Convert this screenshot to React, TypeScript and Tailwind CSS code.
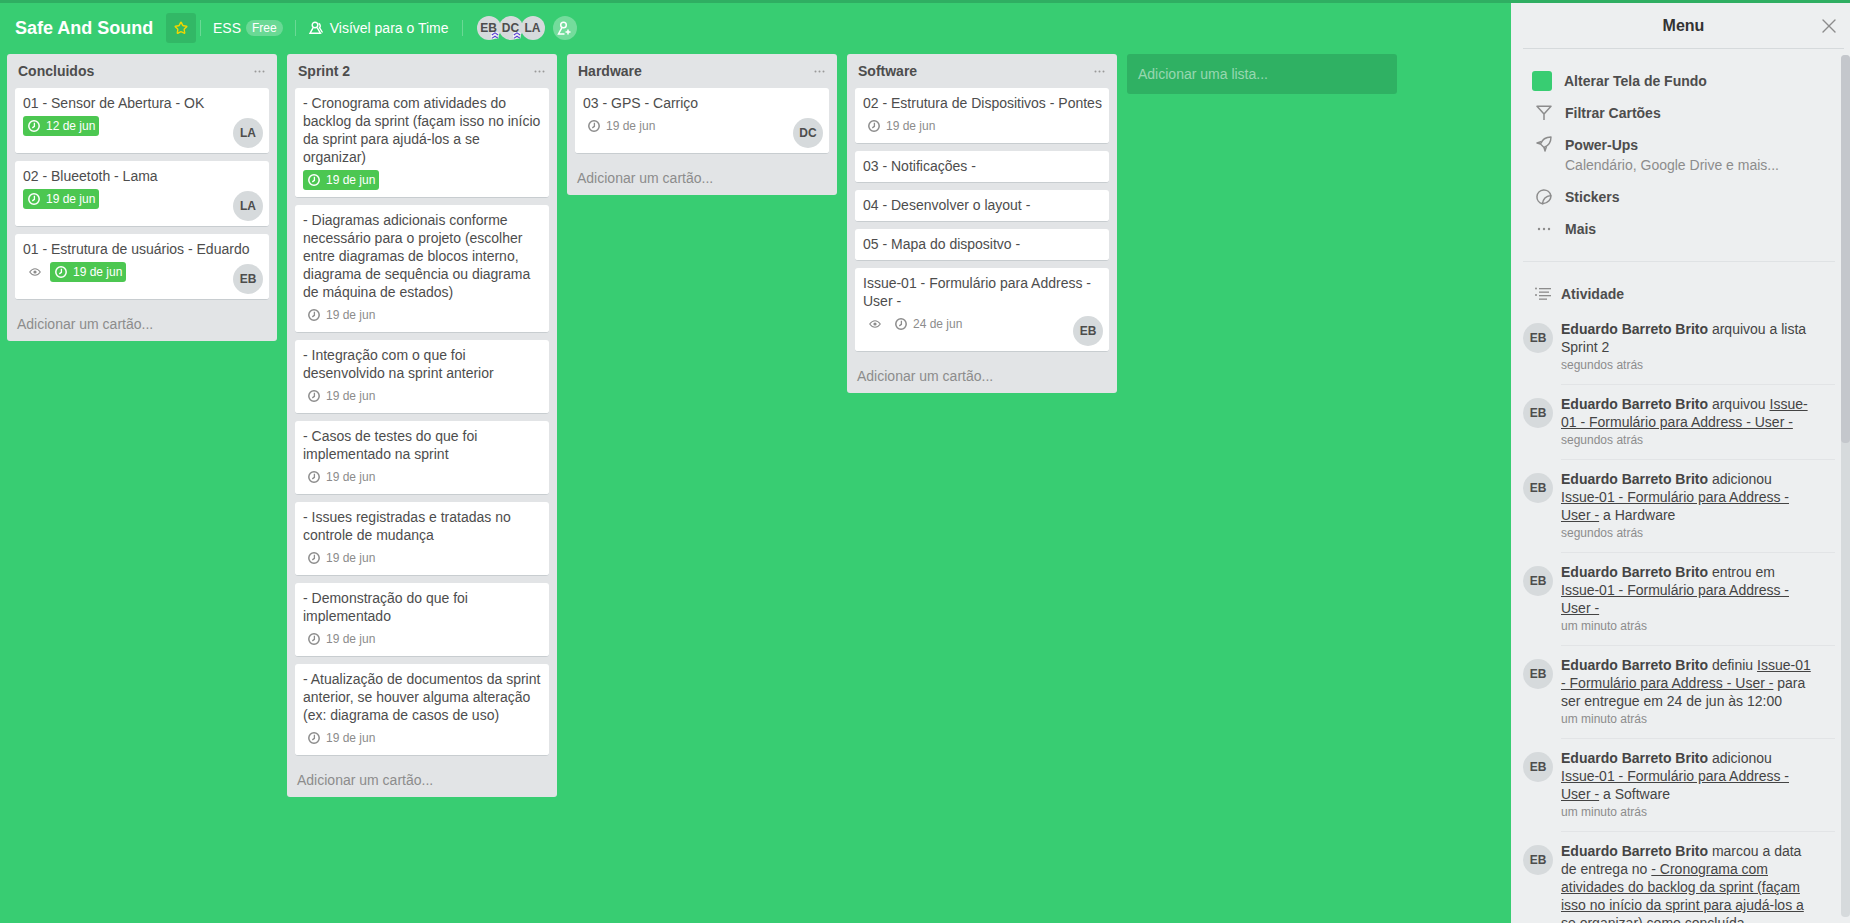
import { Star, X } from 'lucide-react'
import type { ReactNode } from 'react'

type CardData = {
  title: string
  date?: string
  done?: boolean
  watching?: boolean
  member?: string
}

type ListData = {
  name: string
  cards: CardData[]
}

const lists: ListData[] = [
  {
    name: 'Concluidos',
    cards: [
      { title: '01 - Sensor de Abertura - OK', date: '12 de jun', done: true, member: 'LA' },
      { title: '02 - Blueetoth - Lama', date: '19 de jun', done: true, member: 'LA' },
      {
        title: '01 - Estrutura de usuários - Eduardo',
        date: '19 de jun',
        done: true,
        watching: true,
        member: 'EB'
      }
    ]
  },
  {
    name: 'Sprint 2',
    cards: [
      {
        title:
          '- Cronograma com atividades do backlog da sprint (façam isso no início da sprint para ajudá-los a se organizar)',
        date: '19 de jun',
        done: true
      },
      {
        title:
          '- Diagramas adicionais conforme necessário para o projeto (escolher entre diagramas de blocos interno, diagrama de sequência ou diagrama de máquina de estados)',
        date: '19 de jun'
      },
      { title: '- Integração com o que foi desenvolvido na sprint anterior', date: '19 de jun' },
      { title: '- Casos de testes do que foi implementado na sprint', date: '19 de jun' },
      { title: '- Issues registradas e tratadas no controle de mudança', date: '19 de jun' },
      { title: '- Demonstração do que foi implementado', date: '19 de jun' },
      {
        title:
          '- Atualização de documentos da sprint anterior, se houver alguma alteração (ex: diagrama de casos de uso)',
        date: '19 de jun'
      }
    ]
  },
  {
    name: 'Hardware',
    cards: [{ title: '03 - GPS - Carriço', date: '19 de jun', member: 'DC' }]
  },
  {
    name: 'Software',
    cards: [
      { title: '02 - Estrutura de Dispositivos - Pontes', date: '19 de jun' },
      { title: '03 - Notificações -' },
      { title: '04 - Desenvolver o layout -' },
      { title: '05 - Mapa do dispositvo -' },
      {
        title: 'Issue-01 - Formulário para Address - User -',
        date: '24 de jun',
        watching: true,
        member: 'EB'
      }
    ]
  }
]

const ClockIcon = () => (
  <svg width="12" height="12" viewBox="0 0 12 12" fill="none" stroke="currentColor">
    <circle cx="6" cy="6" r="5.2" strokeWidth="1.5" />
    <path d="M6.400 2.800V6.400L4.300 7.900" strokeWidth="1.3" />
  </svg>
)

const EyeIcon = () => (
  <svg width="12" height="8" viewBox="0 0 12 8" fill="none" stroke="currentColor">
    <path d="M.7 4C2.400 1.600 4.200.7 6 .7s3.600.9 5.300 3.300C9.600 6.400 7.800 7.300 6 7.300S2.400 6.400.7 4Z" strokeWidth="1.1" />
    <circle cx="6" cy="4" r="1.600" fill="currentColor" stroke="none" />
  </svg>
)

const Dots = () => (
  <svg width="11" height="3" viewBox="0 0 11 3" fill="currentColor">
    <circle cx="1.5" cy="1.5" r="1" />
    <circle cx="5.5" cy="1.5" r="1" />
    <circle cx="9.5" cy="1.5" r="1" />
  </svg>
)

const MoreIcon = () => (
  <svg width="14" height="4" viewBox="0 0 14 4" fill="currentColor">
    <circle cx="2" cy="2" r="1.2" />
    <circle cx="7" cy="2" r="1.2" />
    <circle cx="12" cy="2" r="1.2" />
  </svg>
)

const Avatar = ({ initials, small }: { initials: string; small?: boolean }) => (
  <div
    className={
      small
        ? 'relative flex h-6 w-6 items-center justify-center rounded-full bg-[#d6dadc] text-xs font-bold text-[#4d4d4d]'
        : 'flex h-[30px] w-[30px] shrink-0 items-center justify-center rounded-full bg-[#d6dadc] text-xs font-bold text-[#4d4d4d]'
    }
  >
    {initials}
  </div>
)

const AdminChevron = () => (
  <svg
    className="absolute right-[2px] bottom-[1px] z-10 rounded-[2px] bg-white/60"
    width="8"
    height="7"
    viewBox="0 0 8 7"
    fill="none"
    stroke="#5b3fd6"
    strokeWidth="1.1"
  >
    <path d="M.8 3 4 .8 7.200 3M.8 6.400 4 4.200l3.200 2.200" />
  </svg>
)

const Card = ({ card }: { card: CardData }) => {
  const hasBadges = card.date || card.watching

  return (
    <div className="rounded-[3px] border-b border-[#c8cdd0] bg-white pt-1.5 pr-1.5 pl-2 text-[#4d4d4d]">
      <p>{card.title}</p>
      {hasBadges ? (
        <div className={card.member ? 'mt-1 mb-[5px] flex justify-between' : 'mt-1 mb-[7px] flex'}>
          <div className="flex h-5 items-center">
            {card.watching && (
              <span className="mr-1 flex w-[23px] justify-center text-[#8c8c8c]">
                <EyeIcon />
              </span>
            )}
            <span
              className={
                card.done
                  ? 'flex h-5 w-[76px] items-center gap-1.5 rounded-[3px] bg-[#4cc751] pl-[5px] text-xs text-white'
                  : 'flex h-5 w-[76px] items-center gap-1.5 rounded-[3px] pl-[5px] text-xs text-[#8c8c8c]'
              }
            >
              <ClockIcon />
              {card.date}
            </span>
          </div>
          {card.member && (
            <div className="mt-0.5">
              <Avatar initials={card.member} />
            </div>
          )}
        </div>
      ) : (
        <div className="h-[7px]" />
      )}
    </div>
  )
}

const List = ({ list }: { list: ListData }) => (
  <section className="w-[270px] shrink-0 self-start rounded-[3px] bg-[#e2e4e6]">
    <header className="flex h-[34px] items-center justify-between pr-3 pl-[11px] font-bold text-[#4d4d4d]">
      {list.name}
      <span className="text-[#999]">
        <Dots />
      </span>
    </header>
    <div className="flex flex-col gap-[7px] px-2">
      {list.cards.map((card) => (
        <Card key={card.title} card={card} />
      ))}
    </div>
    <div className="flex h-[41px] items-center px-2.5 pt-1.5 text-[#8c8c8c]">Adicionar um cartão...</div>
  </section>
)

const BoardHeader = () => (
  <div className="flex h-[50px] items-center pl-[15px] text-white">
    <h1 className="w-[139px] shrink-0 text-lg leading-none font-bold">Safe And Sound</h1>
    <button className="ml-3 flex h-[30px] w-[30px] items-center justify-center rounded-[3px] bg-black/10">
      <Star size={14} strokeWidth={2.4} className="text-[#f2d600]" />
    </button>
    <div className="ml-1 h-4 w-px bg-white/25" />
    <span className="ml-3">ESS</span>
    <span className="ml-[5px] rounded-full bg-white/25 px-1.5 text-xs leading-4">Free</span>
    <div className="ml-3 h-4 w-px bg-white/25" />
    <svg className="ml-3" width="16" height="14" viewBox="0 0 16 14" fill="none" stroke="#fff" strokeWidth="1.4">
      <circle cx="7" cy="4" r="2.800" />
      <path d="M5 6.800 2 12.300h10.500L9.300 6.800M10.500 2.500a2.500 2.500 0 0 1 1 4.200L14.500 11.500" />
    </svg>
    <span className="ml-1.5">Visível para o Time</span>
    <div className="ml-[13px] h-4 w-px bg-white/25" />
    <div className="ml-[14px] flex">
      <div className="relative">
        <Avatar initials="EB" small />
        <AdminChevron />
      </div>
      <div className="relative -ml-0.5">
        <Avatar initials="DC" small />
        <AdminChevron />
      </div>
      <div className="-ml-0.5">
        <Avatar initials="LA" small />
      </div>
    </div>
    <button className="ml-2 flex h-6 w-6 items-center justify-center rounded-full bg-white/30">
      <svg width="15" height="15" viewBox="0 0 15 15" fill="none" stroke="#fff" strokeWidth="1.5">
        <circle cx="6.500" cy="4" r="2.800" />
        <path d="M4.800 6.800 1.500 13h6M11 8.500v5M8.500 11h5" />
      </svg>
    </button>
  </div>
)

const MenuRow = ({ icon, label, sub }: { icon: ReactNode; label: string; sub?: string }) => (
  <div className={sub ? 'flex h-[52px] items-start pt-[7px]' : 'flex h-8 items-center'}>
    <div className="flex w-10 justify-center pl-[2px] text-[#8c8c8c]">{icon}</div>
    <div className="ml-[2px]">
      <div className="font-bold text-[#4d4d4d]">{label}</div>
      {sub && <div className="mt-0.5 text-[#8c8c8c]">{sub}</div>}
    </div>
  </div>
)

const FilterIcon = () => (
  <svg width="16" height="16" viewBox="0 0 16 16" fill="none" stroke="currentColor" strokeWidth="1.5">
    <path d="M1 1.200h14L8 9ZM8 9v6" strokeLinejoin="round" />
  </svg>
)

const RocketIcon = () => (
  <svg width="16" height="16" viewBox="0 0 16 16" fill="none" stroke="currentColor" strokeWidth="1.4">
    <path d="M15 1C10 1 6 4 4.500 8L8 11.500C12 10 15 6 15 1Z" strokeLinejoin="round" />
    <path d="M5.500 5.500 1 7l3.500 1M10.500 10.500 9 15l-1-3.500" strokeLinejoin="round" />
  </svg>
)

const StickerIcon = () => (
  <svg width="16" height="16" viewBox="0 0 16 16" fill="none" stroke="currentColor" strokeWidth="1.5">
    <path d="M14.800 6.500A7 7 0 1 0 6.500 14.800C7 10 10 7 14.800 6.500Z" strokeLinejoin="round" />
    <path d="M14.800 6.500C15.500 10 12 14 6.500 14.800" />
  </svg>
)

const ActivityIcon = () => (
  <svg width="16" height="14" viewBox="0 0 16 14" fill="currentColor">
    <rect x="0" y="0.500" width="2" height="2" rx="1" />
    <rect x="0" y="7" width="2" height="2" rx="1" />
    <rect x="4" y="1" width="12" height="1.300" />
    <rect x="4" y="4.500" width="10" height="1.300" />
    <rect x="4" y="8" width="12" height="1.300" />
    <rect x="4" y="11.500" width="8" height="1.300" />
  </svg>
)

const who = <b className="font-bold">Eduardo Barreto Brito</b>
const issue = 'Issue-01 - Formulário para Address - User -'
const cardLink = (text: string) => <u>{text}</u>

const activity: { id: number; body: ReactNode; time: string }[] = [
  { id: 1, body: <>{who} arquivou a lista Sprint 2</>, time: 'segundos atrás' },
  { id: 2, body: <>{who} arquivou {cardLink(issue)}</>, time: 'segundos atrás' },
  { id: 3, body: <>{who} adicionou {cardLink(issue)} a Hardware</>, time: 'segundos atrás' },
  { id: 4, body: <>{who} entrou em {cardLink(issue)}</>, time: 'um minuto atrás' },
  {
    id: 5,
    body: <>{who} definiu {cardLink(issue)} para ser entregue em 24 de jun às 12:00</>,
    time: 'um minuto atrás'
  },
  { id: 6, body: <>{who} adicionou {cardLink(issue)} a Software</>, time: 'um minuto atrás' },
  {
    id: 7,
    body: (
      <>
        {who} marcou a data de entrega no{' '}
        {cardLink(
          '- Cronograma com atividades do backlog da sprint (façam isso no início da sprint para ajudá-los a se organizar)'
        )}{' '}
        como concluída
      </>
    ),
    time: 'um minuto atrás'
  }
]

const SidePanel = () => (
  <aside className="flex h-full w-[339px] shrink-0 flex-col bg-[#edeff0]">
    <div className="mr-1.5 ml-3 grid h-[46px] shrink-0 grid-cols-[1fr_auto_1fr] items-center border-b border-[#d6dadc]">
      <span />
      <h2 className="text-base font-bold text-[#333]">Menu</h2>
      <X size={24} strokeWidth={1.4} className="mr-[3px] justify-self-end text-[#8c8c8c]" />
    </div>
    <div className="flex min-h-0 flex-1">
      <div className="min-w-0 flex-1 overflow-hidden pl-3">
        <div className="mr-[6px] border-b border-[#dfe2e4] py-4">
          <div className="flex h-8 items-center">
            <div className="ml-[9px] h-5 w-5 rounded-[3px] bg-[#38cd72]" />
            <span className="ml-3 font-bold text-[#4d4d4d]">Alterar Tela de Fundo</span>
          </div>
          <MenuRow icon={<FilterIcon />} label="Filtrar Cartões" />
          <MenuRow icon={<RocketIcon />} label="Power-Ups" sub="Calendário, Google Drive e mais..." />
          <MenuRow icon={<StickerIcon />} label="Stickers" />
          <MenuRow icon={<MoreIcon />} label="Mais" />
        </div>
        <div className="mt-4 flex h-8 items-center font-bold text-[#4d4d4d]">
          <span className="flex w-[38px] justify-center pl-[2px] text-[#8c8c8c]">
            <ActivityIcon />
          </span>
          Atividade
        </div>
        {activity.map((item) => (
          <div key={item.id} className="flex gap-2">
            <div className="pt-[13px]">
              <Avatar initials="EB" />
            </div>
            <div className="mr-[6px] flex-1 border-b border-[#e2e4e6] pt-2.5 pr-[22px] pb-2.5 text-[#444]">
              <p>{item.body}</p>
              <p className="text-xs leading-[18px] text-[#8c8c8c]">{item.time}</p>
            </div>
          </div>
        ))}
      </div>
      <div className="my-[6px] w-[9px] shrink-0 rounded bg-[#d6dadc]">
        <div className="h-[388px] rounded bg-[#c4c7cc]" />
      </div>
    </div>
  </aside>
)

const App = () => {
  return (
    <div className="flex h-screen w-full overflow-hidden border-t-[3px] border-[#2fae62] bg-[#38cd72] font-['Liberation_Sans',Arial,sans-serif] text-sm leading-[18px]">
      <main className="min-w-0 flex-1">
        <BoardHeader />
        <div className="mt-[1px] flex items-start gap-2.5 pl-[7px]">
          {lists.map((list) => (
            <List key={list.name} list={list} />
          ))}
          <div className="flex h-10 w-[270px] shrink-0 items-center rounded-[3px] bg-[#2fb163] px-[11px] text-white/50">
            Adicionar uma lista...
          </div>
        </div>
      </main>
      <SidePanel />
    </div>
  )
}

export default App
